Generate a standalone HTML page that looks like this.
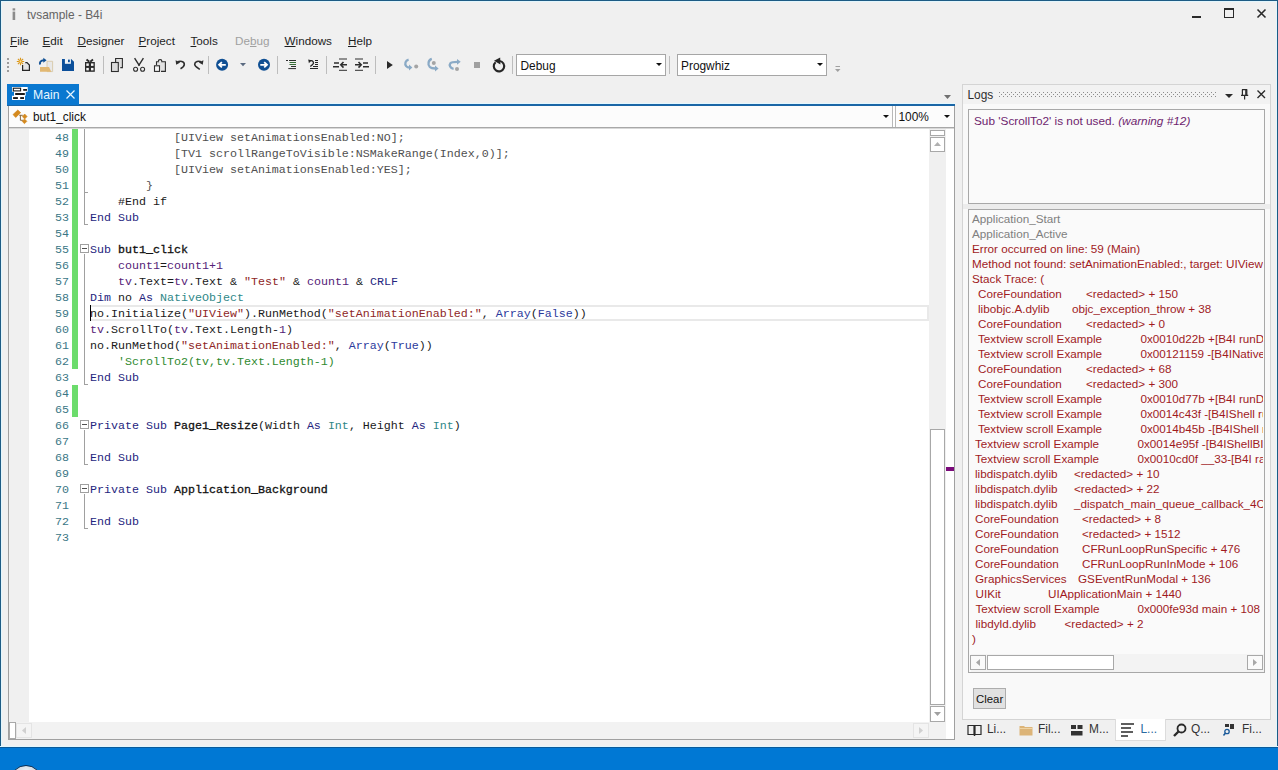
<!DOCTYPE html>
<html><head><meta charset="utf-8"><style>
*{margin:0;padding:0;box-sizing:border-box}
html,body{width:1278px;height:770px;overflow:hidden;background:#f0f0f0;position:relative;font-family:"Liberation Sans", sans-serif}
.r{position:absolute}
.t{position:absolute;white-space:pre;line-height:14px;font-family:"Liberation Sans", sans-serif}
.c{position:absolute;white-space:pre;line-height:16px;font-family:"Liberation Mono", monospace;font-size:11.67px;left:90px;color:#1a1a1a}
.ln{position:absolute;white-space:pre;line-height:16px;font-family:"Liberation Mono", monospace;font-size:11.67px;color:#3a7686;text-align:right;width:40px;left:29px}
svg{position:absolute;overflow:visible}
.kw{color:#25257e} .bd{color:#111;-webkit-text-stroke:0.3px #111} .vr{color:#552278} .st{color:#8e2626} .ty{color:#2f8888} .cm{color:#2f8a2f} .oc{color:#505050} .bl{color:#2c3a9c}
.lg{position:absolute;white-space:pre;line-height:14px;font-family:"Liberation Sans", sans-serif;font-size:11.7px;color:#a01a1e}
</style></head><body>

<div class="r" style="left:0px;top:0px;width:1278px;height:1px;background:#1d5b84"></div>
<div class="r" style="left:0px;top:1px;width:1278px;height:1px;background:#e2f6fd"></div>
<div class="r" style="left:0px;top:0px;width:1px;height:747px;background:#1d5b84"></div>
<div class="r" style="left:1px;top:1px;width:1px;height:746px;background:#e2f6fd"></div>
<div class="r" style="left:1277px;top:0px;width:1px;height:747px;background:#1d5b84"></div>
<div class="r" style="left:1276px;top:1px;width:1px;height:746px;background:#e2f6fd"></div>
<div class="r" style="left:0px;top:746px;width:1278px;height:1px;background:#e2f6fd"></div>
<div class="r" style="left:0px;top:747px;width:1278px;height:23px;background:#0078d4"></div>
<div class="r" style="left:0px;top:747px;width:1278px;height:1px;background:#0a5a9a"></div>
<div class="r" style="left:10px;top:765px;width:32px;height:32px;border-radius:50%;border:1.5px solid #0b2f55;background:radial-gradient(circle at 50% 20%,#eef2f6,#b4c4d2 60%)"></div>
<svg style="position:absolute;left:12px;top:8px" width="4" height="13"><rect x="0.6" y="0.3" width="2.6" height="2.2" fill="#8c8c8c"/><rect x="0.6" y="3.6" width="2.6" height="8.4" fill="#8c8c8c"/></svg>
<div class="t" style="left:27px;top:8px;font-size:11.9px;color:#646464;">tvsample - B4i</div>
<div class="r" style="left:1192px;top:16px;width:9px;height:2px;background:#2a2a2a"></div>
<div class="r" style="left:1224px;top:8px;width:10px;height:10px;border:1px solid #2a2a2a;border-top:2px solid #2a2a2a"></div>
<svg style="left:1257px;top:9px" width="9" height="9"><path d="M0.5 0.5L8.5 8.5M8.5 0.5L0.5 8.5" stroke="#2a2a2a" stroke-width="1.6"/></svg>
<div class="t" style="left:10.0px;top:34px;font-size:11.7px;color:#1e1e1e;"><u style="text-decoration-thickness:1px;text-underline-offset:1px">F</u>ile</div>
<div class="t" style="left:42.5px;top:34px;font-size:11.7px;color:#1e1e1e;"><u style="text-decoration-thickness:1px;text-underline-offset:1px">E</u>dit</div>
<div class="t" style="left:77.5px;top:34px;font-size:11.7px;color:#1e1e1e;"><u style="text-decoration-thickness:1px;text-underline-offset:1px">D</u>esigner</div>
<div class="t" style="left:138.5px;top:34px;font-size:11.7px;color:#1e1e1e;"><u style="text-decoration-thickness:1px;text-underline-offset:1px">P</u>roject</div>
<div class="t" style="left:190.5px;top:34px;font-size:11.7px;color:#1e1e1e;"><u style="text-decoration-thickness:1px;text-underline-offset:1px">T</u>ools</div>
<div class="t" style="left:235.0px;top:34px;font-size:11.7px;color:#a0a0a0;">De<u style="text-decoration-thickness:1px;text-underline-offset:1px">b</u>ug</div>
<div class="t" style="left:284.5px;top:34px;font-size:11.7px;color:#1e1e1e;"><u style="text-decoration-thickness:1px;text-underline-offset:1px">W</u>indows</div>
<div class="t" style="left:348.0px;top:34px;font-size:11.7px;color:#1e1e1e;"><u style="text-decoration-thickness:1px;text-underline-offset:1px">H</u>elp</div>
<div class="r" style="left:7px;top:58px;width:2px;height:2px;background:#9c9c9c"></div>
<div class="r" style="left:7px;top:62px;width:2px;height:2px;background:#9c9c9c"></div>
<div class="r" style="left:7px;top:66px;width:2px;height:2px;background:#9c9c9c"></div>
<div class="r" style="left:7px;top:70px;width:2px;height:2px;background:#9c9c9c"></div>
<svg style="left:16px;top:56px" width="16" height="17" viewBox="16 56 16 17"><g stroke="#d8961e" stroke-width="1.1"><path d="M20.5 57.8V65.2M16.8 61.5H24.2M17.9 58.9L23.1 64.1M23.1 58.9L17.9 64.1"/></g><circle cx="20.5" cy="61.5" r="1.9" fill="#e4a428"/><circle cx="20.5" cy="61.5" r="0.9" fill="#f8e0a0"/><path d="M25.3 62.6H27L29.4 65V70.4H22.6V65" fill="#e4e4e4" stroke="#262626" stroke-width="1.2"/></svg>
<svg style="left:38px;top:56px" width="16" height="17" viewBox="38 56 16 17"><path d="M47 61.3H52.6V71.6H47Z" fill="#e8e8e8" stroke="#d8c8a8" stroke-width="0.9"/><path d="M40 67H49L51.3 71.8H40Z" fill="#e2b872"/><path d="M40.3 64.6C39 62.5 40.8 60.3 44 60.3" fill="none" stroke="#0f4f93" stroke-width="1.9"/><path d="M43.3 57.8L46.6 60.3L43.3 62.8Z" fill="#0f4f93"/></svg>
<svg style="left:61px;top:58px" width="14" height="14" viewBox="61 58 14 14"><path d="M62 59H71.2L74 61.8V71H62Z" fill="#0b4f9a"/><rect x="64.9" y="59" width="6" height="4.8" fill="#f0f4f8"/><rect x="68" y="59.6" width="1.8" height="2.6" fill="#0b4f9a"/></svg>
<svg style="left:84px;top:57px" width="12" height="16" viewBox="84 57 12 16"><path d="M86.5 59.5L89.3 61.8M93 59.5L90.2 61.8" stroke="#2a2a2a" stroke-width="1.8"/><rect x="85" y="62" width="9.8" height="9.8" fill="#2a2a2a"/><rect x="86.3" y="63.4" width="2.5" height="2.5" fill="#f4f4f4"/><rect x="91" y="63.4" width="2.5" height="2.5" fill="#f4f4f4"/><rect x="86.3" y="67.9" width="2.5" height="2.5" fill="#f4f4f4"/><rect x="91" y="67.9" width="2.5" height="2.5" fill="#f4f4f4"/></svg>
<div class="r" style="left:103px;top:56px;width:1px;height:18px;background:#bdbdbd"></div>
<div class="r" style="left:208px;top:56px;width:1px;height:18px;background:#bdbdbd"></div>
<div class="r" style="left:277px;top:56px;width:1px;height:18px;background:#bdbdbd"></div>
<div class="r" style="left:326px;top:56px;width:1px;height:18px;background:#bdbdbd"></div>
<div class="r" style="left:375px;top:56px;width:1px;height:18px;background:#bdbdbd"></div>
<div class="r" style="left:512px;top:56px;width:1px;height:18px;background:#bdbdbd"></div>
<div class="r" style="left:669px;top:56px;width:1px;height:18px;background:#bdbdbd"></div>
<svg style="left:110px;top:57px" width="14" height="16" viewBox="110 57 14 16"><path d="M115.6 62V58.5H122.4V67.6H120.3" fill="#dedede" stroke="#2e2e2e" stroke-width="1.1"/><rect x="111.5" y="62.5" width="6.8" height="9" fill="#dcdcdc" stroke="#2e2e2e" stroke-width="1.1"/></svg>
<svg style="left:132px;top:57px" width="14" height="16" viewBox="132 57 14 16"><path d="M134.6 58.2L139.5 65.8M143.4 58.2L138.5 65.8" stroke="#2e2e2e" stroke-width="1.4" fill="none"/><circle cx="135.6" cy="69.3" r="2" fill="none" stroke="#2e2e2e" stroke-width="1.1"/><circle cx="142.6" cy="69.3" r="2" fill="none" stroke="#2e2e2e" stroke-width="1.1"/></svg>
<svg style="left:153px;top:57px" width="14" height="16" viewBox="153 57 14 16"><path d="M156.5 65V61.8H158.5A1.6 1.6 0 0 1 161.7 61.8H165.4V71.4H161" fill="#e2e2e2" stroke="#2e2e2e" stroke-width="1.1"/><path d="M158.3 61.5A1.8 1.8 0 0 1 161.9 61.5" fill="#fff" stroke="#2e2e2e" stroke-width="1.2"/><rect x="154.5" y="65.8" width="5" height="5.6" fill="#f6f6f6" stroke="#2e2e2e" stroke-width="1.1"/></svg>
<svg style="left:174px;top:59px" width="12" height="11" viewBox="174 59 12 11"><path d="M177.5 61.8C180 60.8 184.3 61.2 184.3 64.3C184.3 66.5 182.5 67.8 180.5 68.8" fill="none" stroke="#2e2e2e" stroke-width="1.6"/><path d="M175.6 60.2L176.2 64.8L180.2 62.4Z" fill="#2e2e2e"/></svg>
<svg style="left:193px;top:59px" width="12" height="12" viewBox="193 59 12 12"><path d="M201.2 61.8C198.8 60.6 194.8 61.3 194.7 64.3C194.8 66.5 197.5 67.8 199.8 69.3" fill="none" stroke="#2e2e2e" stroke-width="1.6"/><path d="M203.4 60.2L202.8 64.8L198.8 62.4Z" fill="#2e2e2e"/></svg>
<svg style="left:215px;top:58px" width="14" height="14" viewBox="215 58 14 14"><circle cx="222.1" cy="64.8" r="6" fill="#0f4f93"/><path d="M225.8 64.8H220.3M221.9 62.2L219.1 64.8L221.9 67.4" fill="none" stroke="#fff" stroke-width="1.8"/></svg>
<svg style="left:239px;top:62px" width="8" height="5" viewBox="239 62 8 5"><path d="M240 63H246L243 66.3Z" fill="#5a6a80"/></svg>
<svg style="left:257px;top:58px" width="14" height="14" viewBox="257 58 14 14"><circle cx="264" cy="64.8" r="6" fill="#0f4f93"/><path d="M260.3 64.8H265.8M264.2 62.2L267 64.8L264.2 67.4" fill="none" stroke="#fff" stroke-width="1.8"/></svg>
<svg style="left:285px;top:59px" width="12" height="11" viewBox="285 59 12 11"><path d="M286 60.5H288M289 60.5H296M288.3 68.6H296M291 66.5H296" stroke="#2e2e2e" stroke-width="1"/><path d="M289.5 62.5H296M289.5 64.5H296" stroke="#356a35" stroke-width="1"/></svg>
<svg style="left:307px;top:58px" width="12" height="12" viewBox="307 58 12 12"><path d="M308.2 59.6L311.6 60.3L308.9 63.2Z" fill="#262626"/><path d="M309.6 60.9C313 59.9 314.6 62.6 312.6 64.6L310.3 66.5" fill="none" stroke="#262626" stroke-width="1.3"/><path d="M315 60.5H318M315 62.5H318M315 64.5H318M313 66.5H318M310 68.5H318" stroke="#262626" stroke-width="1"/></svg>
<svg style="left:332px;top:58px" width="16" height="14" viewBox="332 58 16 14"><path d="M339 59H347M339 70.3H347" stroke="#2e2e2e" stroke-width="1"/><path d="M334 63H339M333 66.8H339M341 64.8H347" stroke="#2e2e2e" stroke-width="1.6"/><path d="M343.5 62L340.8 64.8L343.5 67.6" fill="none" stroke="#2e2e2e" stroke-width="1.6"/></svg>
<svg style="left:354px;top:58px" width="16" height="14" viewBox="354 58 16 14"><path d="M355 59H363M355 70.3H363" stroke="#2e2e2e" stroke-width="1"/><path d="M363 63H368M363 66.8H369M355 64.8H361" stroke="#2e2e2e" stroke-width="1.6"/><path d="M358.5 62L361.2 64.8L358.5 67.6" fill="none" stroke="#2e2e2e" stroke-width="1.6"/></svg>
<svg style="left:386px;top:60px" width="8" height="10" viewBox="386 60 8 10"><path d="M387 61L392.8 65L387 69Z" fill="#2a2a2a"/></svg>
<svg style="left:403px;top:58px" width="16" height="14" viewBox="403 58 16 14"><path d="M408.6 59.6C405.4 60.4 404.3 63.8 406.3 66.2C407.2 67.2 408.3 67.5 409.5 67.5" fill="none" stroke="#8aaac6" stroke-width="2.3"/><path d="M409 64.6L412.4 67.5L409 70.4Z" fill="#8aaac6"/><circle cx="416.2" cy="66.5" r="2" fill="#a4a4a4"/></svg>
<svg style="left:426px;top:57px" width="14" height="16" viewBox="426 57 14 16"><path d="M431.8 58.8C428.3 59.8 427.4 64.6 429.8 67 C431 68.2 432.6 68.5 435.5 68.5" fill="none" stroke="#8aaac6" stroke-width="2.3"/><path d="M435 65.6L438.6 68.5L435 71.4Z" fill="#8aaac6"/><circle cx="433.8" cy="63" r="2" fill="#a4a4a4"/></svg>
<svg style="left:448px;top:57px" width="14" height="15" viewBox="448 57 14 15"><path d="M453.6 68.8C450 68.3 449 65 450.4 63.2C451.6 61.8 454 61.8 457.5 61.8" fill="none" stroke="#8aaac6" stroke-width="2.3"/><path d="M457 58.9L460.7 61.8L457 64.7Z" fill="#8aaac6"/><circle cx="457" cy="69" r="2" fill="#a4a4a4"/></svg>
<div class="r" style="left:474px;top:62px;width:6px;height:6px;background:#a0a0a0"></div>
<svg style="left:492px;top:56px" width="14" height="17" viewBox="492 56 14 17"><path d="M495.6 62.2A5.2 5.2 0 1 0 499.6 61" fill="none" stroke="#262626" stroke-width="2.1"/><path d="M494 60.8L500.2 57.6L500.4 64.4Z" fill="#262626"/></svg>
<div class="r" style="left:516px;top:54px;width:150px;height:22px;background:#fff;border:1px solid #a6a6a6"></div>
<div class="t" style="left:520.5px;top:59px;font-size:11.9px;color:#111;">Debug</div>
<svg style="left:656px;top:63px" width="7" height="4" viewBox="0 0 7 4"><path d="M0 0H6L3 3Z" fill="#111"/></svg>
<div class="r" style="left:677px;top:54px;width:150px;height:22px;background:#fff;border:1px solid #a6a6a6"></div>
<div class="t" style="left:681px;top:59px;font-size:11.9px;color:#111;">Progwhiz</div>
<svg style="left:817px;top:63px" width="7" height="4" viewBox="0 0 7 4"><path d="M0 0H6L3 3Z" fill="#111"/></svg>
<svg style="left:835px;top:66px" width="6" height="7" viewBox="0 0 6 7"><path d="M0.5 0.5H5" stroke="#a0a0a0" stroke-width="1"/><path d="M0 3H5.5L2.75 6Z" fill="#a0a0a0"/></svg>
<div class="r" style="left:7px;top:84px;width:72px;height:22px;background:#0a78d0"></div>
<svg style="left:11px;top:86px" width="18" height="15" viewBox="11 86 18 15"><path d="M12 87H27.7V91.7H25.7V95.7H25V100H12V95.7H14V91.7H12Z" fill="#fff"/><rect x="13.3" y="88.2" width="7.3" height="2.7" fill="none" stroke="#1a1a1a" stroke-width="1.1"/><rect x="23.2" y="89" width="3.8" height="1.8" fill="#1a1a1a"/><rect x="15.2" y="93" width="9.6" height="2" fill="#1a1a1a"/><rect x="13.1" y="97.1" width="4.8" height="1.9" fill="#1a1a1a"/><rect x="20.2" y="97.1" width="3.8" height="1.9" fill="#1a1a1a"/></svg>
<div class="t" style="left:33px;top:88px;font-size:12.2px;color:#e8f6ff;">Main</div>
<svg style="left:66px;top:90px" width="9" height="9" viewBox="0 0 9 9"><path d="M0.5 0.5L8.5 8.5M8.5 0.5L0.5 8.5" stroke="#e8f6ff" stroke-width="1.2"/></svg>
<div class="r" style="left:79px;top:103px;width:876px;height:1px;background:#e4f8ff"></div>
<div class="r" style="left:7px;top:104px;width:948px;height:2px;background:#1a66a6"></div>
<div class="r" style="left:7px;top:104px;width:72px;height:1px;background:#0a78d0"></div>
<svg style="left:944px;top:95px" width="8" height="5" viewBox="0 0 8 5"><path d="M0 0H7L3.5 4Z" fill="#707070"/></svg>
<div class="r" style="left:8px;top:106px;width:947px;height:634px;background:#fff;border-left:1px solid #a0a0a0;border-right:1px solid #a0a0a0;border-bottom:1px solid #a0a0a0"></div>
<div class="r" style="left:9px;top:106px;width:884px;height:21px;background:#fcfcfc;border-right:1px solid #b8b8b8"></div>
<div class="r" style="left:895px;top:106px;width:59px;height:21px;background:#fcfcfc;border-left:1px solid #b8b8b8"></div>
<div class="r" style="left:9px;top:127px;width:945px;height:1px;background:#a8a8a8"></div>
<div class="r" style="left:9px;top:128px;width:945px;height:1px;background:#d8d8d8"></div>
<svg style="left:12px;top:109px" width="16" height="16" viewBox="12 109 16 16"><path d="M13.1 114.5L17.8 110.1L20.6 112.7L15.7 117.4Z" fill="#d4891e" stroke="#d4891e" stroke-width="0.8" stroke-linejoin="round"/><path d="M19.3 115.3H22.8M20.4 115.3V120.3H23" fill="none" stroke="#7a5a30" stroke-width="0.9"/><path d="M22.3 116.5L24.7 114L27.1 116.5L24.7 119Z" fill="#d4891e" stroke="#d4891e" stroke-width="0.6"/><path d="M22.1 121.3L24.5 118.9L26.9 121.3L24.5 123.7Z" fill="#d4891e" stroke="#d4891e" stroke-width="0.6"/></svg>
<div class="t" style="left:33px;top:110px;font-size:11.9px;color:#111;">but1_click</div>
<svg style="left:883px;top:115px" width="7" height="4" viewBox="0 0 7 4"><path d="M0 0H6L3 3Z" fill="#111"/></svg>
<div class="t" style="left:898.5px;top:110px;font-size:11.9px;color:#111;">100%</div>
<svg style="left:944px;top:115px" width="7" height="4" viewBox="0 0 7 4"><path d="M0 0H6L3 3Z" fill="#111"/></svg>
<div class="r" style="left:9px;top:129px;width:20px;height:593px;background:#f0f0f0"></div>
<div class="r" style="left:90px;top:305px;width:839px;height:16px;border:2px solid #e9e9e9;border-left:none"></div>
<div class="r" style="left:90px;top:305px;width:1px;height:16px;background:#000"></div>
<div class="r" style="left:72px;top:129px;width:6px;height:240px;background:#6cdc6c"></div>
<div class="r" style="left:72px;top:385px;width:6px;height:32px;background:#6cdc6c"></div>
<div class="ln" style="top:130px">48</div>
<div class="c" style="top:130px"><span class="oc">            [UIView setAnimationsEnabled:NO];</span></div>
<div class="ln" style="top:146px">49</div>
<div class="c" style="top:146px"><span class="oc">            [TV1 scrollRangeToVisible:NSMakeRange(Index,0)];</span></div>
<div class="ln" style="top:162px">50</div>
<div class="c" style="top:162px"><span class="oc">            [UIView setAnimationsEnabled:YES];</span></div>
<div class="ln" style="top:178px">51</div>
<div class="c" style="top:178px"><span class="oc">        }</span></div>
<div class="ln" style="top:194px">52</div>
<div class="c" style="top:194px">    #End if</div>
<div class="ln" style="top:210px">53</div>
<div class="c" style="top:210px"><span class="kw">End Sub</span></div>
<div class="ln" style="top:226px">54</div>
<div class="ln" style="top:242px">55</div>
<div class="c" style="top:242px"><span class="kw">Sub</span> <span class="bd">but1_click</span></div>
<div class="ln" style="top:258px">56</div>
<div class="c" style="top:258px">    <span class="vr">count1</span>=<span class="vr">count1</span><span class="vr">+1</span></div>
<div class="ln" style="top:274px">57</div>
<div class="c" style="top:274px">    <span class="vr">tv</span>.Text=<span class="vr">tv</span>.Text &amp; <span class="st">"Test"</span> &amp; <span class="vr">count1</span> &amp; <span class="kw">CRLF</span></div>
<div class="ln" style="top:290px">58</div>
<div class="c" style="top:290px"><span class="kw">Dim</span> no <span class="kw">As</span> <span class="ty">NativeObject</span></div>
<div class="ln" style="top:306px">59</div>
<div class="c" style="top:306px">no.Initialize(<span class="st">"UIView"</span>).RunMethod(<span class="st">"setAnimationEnabled:"</span>, <span class="bl">Array</span>(<span class="bl">False</span>))</div>
<div class="ln" style="top:322px">60</div>
<div class="c" style="top:322px"><span class="vr">tv</span>.ScrollTo(<span class="vr">tv</span>.Text.Length-<span class="vr">1</span>)</div>
<div class="ln" style="top:338px">61</div>
<div class="c" style="top:338px">no.RunMethod(<span class="st">"setAnimationEnabled:"</span>, <span class="bl">Array</span>(<span class="bl">True</span>))</div>
<div class="ln" style="top:354px">62</div>
<div class="c" style="top:354px"><span class="cm">    'ScrollTo2(tv,tv.Text.Length-1)</span></div>
<div class="ln" style="top:370px">63</div>
<div class="c" style="top:370px"><span class="kw">End Sub</span></div>
<div class="ln" style="top:386px">64</div>
<div class="ln" style="top:402px">65</div>
<div class="ln" style="top:418px">66</div>
<div class="c" style="top:418px"><span class="kw">Private Sub</span> <span class="bd">Page1_Resize</span>(Width <span class="kw">As</span> <span class="ty">Int</span>, Height <span class="kw">As</span> <span class="ty">Int</span>)</div>
<div class="ln" style="top:434px">67</div>
<div class="ln" style="top:450px">68</div>
<div class="c" style="top:450px"><span class="kw">End Sub</span></div>
<div class="ln" style="top:466px">69</div>
<div class="ln" style="top:482px">70</div>
<div class="c" style="top:482px"><span class="kw">Private Sub</span> <span class="bd">Application_Background</span></div>
<div class="ln" style="top:498px">71</div>
<div class="ln" style="top:514px">72</div>
<div class="c" style="top:514px"><span class="kw">End Sub</span></div>
<div class="ln" style="top:530px">73</div>
<div class="r" style="left:84px;top:129px;width:1px;height:95px;background:#a0a0a0"></div>
<div class="r" style="left:84px;top:192px;width:4px;height:1px;background:#a0a0a0"></div>
<div class="r" style="left:84px;top:224px;width:4px;height:1px;background:#a0a0a0"></div>
<div class="r" style="left:80px;top:244px;width:9px;height:9px;border:1px solid #a0a0a0;background:#fff"></div>
<div class="r" style="left:82px;top:248px;width:5px;height:1px;background:#505050"></div>
<div class="r" style="left:84px;top:254px;width:1px;height:130px;background:#a0a0a0"></div>
<div class="r" style="left:84px;top:384px;width:4px;height:1px;background:#a0a0a0"></div>
<div class="r" style="left:80px;top:420px;width:9px;height:9px;border:1px solid #a0a0a0;background:#fff"></div>
<div class="r" style="left:82px;top:424px;width:5px;height:1px;background:#505050"></div>
<div class="r" style="left:84px;top:430px;width:1px;height:34px;background:#a0a0a0"></div>
<div class="r" style="left:84px;top:464px;width:4px;height:1px;background:#a0a0a0"></div>
<div class="r" style="left:80px;top:484px;width:9px;height:9px;border:1px solid #a0a0a0;background:#fff"></div>
<div class="r" style="left:82px;top:488px;width:5px;height:1px;background:#505050"></div>
<div class="r" style="left:84px;top:494px;width:1px;height:34px;background:#a0a0a0"></div>
<div class="r" style="left:84px;top:528px;width:4px;height:1px;background:#a0a0a0"></div>
<div class="r" style="left:929px;top:129px;width:17px;height:593px;background:#f0f0f0"></div>
<div class="r" style="left:946px;top:129px;width:8px;height:593px;background:#fff"></div>
<div class="r" style="left:930px;top:130px;width:15px;height:6px;background:#fff;border:1px solid #a8a8a8"></div>
<div class="r" style="left:930px;top:137px;width:15px;height:15px;background:#fff;border:1px solid #a8a8a8"></div>
<svg style="left:934px;top:142px" width="7" height="4" viewBox="0 0 7 4"><path d="M0 4H7L3.5 0Z" fill="#b0b0b0"/></svg>
<div class="r" style="left:930px;top:429px;width:15px;height:276px;background:#fff;border:1px solid #a8a8a8"></div>
<div class="r" style="left:930px;top:706px;width:15px;height:16px;background:#fff;border:1px solid #a8a8a8"></div>
<svg style="left:934px;top:712px" width="7" height="4" viewBox="0 0 7 4"><path d="M0 0H7L3.5 4Z" fill="#a0a0a0"/></svg>
<div class="r" style="left:946px;top:467px;width:8px;height:4px;background:#7a0a7a"></div>
<div class="r" style="left:9px;top:722px;width:937px;height:17px;background:#f2f2f2"></div>
<div class="r" style="left:9px;top:722px;width:7px;height:17px;background:#fff;border:1px solid #a8a8a8"></div>
<div class="r" style="left:16px;top:723px;width:16px;height:15px;background:#f4f4f4;border:1px solid #e4e4e4"></div>
<svg style="left:22px;top:727px" width="4" height="7" viewBox="0 0 4 7"><path d="M4 0V7L0 3.5Z" fill="#d0d0d0"/></svg>
<div class="r" style="left:913px;top:723px;width:16px;height:15px;background:#f4f4f4;border:1px solid #e4e4e4"></div>
<svg style="left:919px;top:727px" width="4" height="7" viewBox="0 0 4 7"><path d="M0 0V7L4 3.5Z" fill="#d0d0d0"/></svg>
<div class="r" style="left:962px;top:84px;width:309px;height:636px;background:#f9f9f9;border:1px solid #d4d4d4"></div>
<div class="r" style="left:963px;top:85px;width:307px;height:19px;background:#f2f2f2"></div>
<div class="t" style="left:967.5px;top:88px;font-size:11.9px;color:#2e2e2e;">Logs</div>
<svg style="left:999px;top:92px" width="220" height="6"><g fill="#8c8c8c"><rect x="0" y="0" width="1" height="1"/><rect x="0" y="4" width="1" height="1"/><rect x="2" y="2" width="1" height="1"/><rect x="4" y="0" width="1" height="1"/><rect x="4" y="4" width="1" height="1"/><rect x="6" y="2" width="1" height="1"/><rect x="8" y="0" width="1" height="1"/><rect x="8" y="4" width="1" height="1"/><rect x="10" y="2" width="1" height="1"/><rect x="12" y="0" width="1" height="1"/><rect x="12" y="4" width="1" height="1"/><rect x="14" y="2" width="1" height="1"/><rect x="16" y="0" width="1" height="1"/><rect x="16" y="4" width="1" height="1"/><rect x="18" y="2" width="1" height="1"/><rect x="20" y="0" width="1" height="1"/><rect x="20" y="4" width="1" height="1"/><rect x="22" y="2" width="1" height="1"/><rect x="24" y="0" width="1" height="1"/><rect x="24" y="4" width="1" height="1"/><rect x="26" y="2" width="1" height="1"/><rect x="28" y="0" width="1" height="1"/><rect x="28" y="4" width="1" height="1"/><rect x="30" y="2" width="1" height="1"/><rect x="32" y="0" width="1" height="1"/><rect x="32" y="4" width="1" height="1"/><rect x="34" y="2" width="1" height="1"/><rect x="36" y="0" width="1" height="1"/><rect x="36" y="4" width="1" height="1"/><rect x="38" y="2" width="1" height="1"/><rect x="40" y="0" width="1" height="1"/><rect x="40" y="4" width="1" height="1"/><rect x="42" y="2" width="1" height="1"/><rect x="44" y="0" width="1" height="1"/><rect x="44" y="4" width="1" height="1"/><rect x="46" y="2" width="1" height="1"/><rect x="48" y="0" width="1" height="1"/><rect x="48" y="4" width="1" height="1"/><rect x="50" y="2" width="1" height="1"/><rect x="52" y="0" width="1" height="1"/><rect x="52" y="4" width="1" height="1"/><rect x="54" y="2" width="1" height="1"/><rect x="56" y="0" width="1" height="1"/><rect x="56" y="4" width="1" height="1"/><rect x="58" y="2" width="1" height="1"/><rect x="60" y="0" width="1" height="1"/><rect x="60" y="4" width="1" height="1"/><rect x="62" y="2" width="1" height="1"/><rect x="64" y="0" width="1" height="1"/><rect x="64" y="4" width="1" height="1"/><rect x="66" y="2" width="1" height="1"/><rect x="68" y="0" width="1" height="1"/><rect x="68" y="4" width="1" height="1"/><rect x="70" y="2" width="1" height="1"/><rect x="72" y="0" width="1" height="1"/><rect x="72" y="4" width="1" height="1"/><rect x="74" y="2" width="1" height="1"/><rect x="76" y="0" width="1" height="1"/><rect x="76" y="4" width="1" height="1"/><rect x="78" y="2" width="1" height="1"/><rect x="80" y="0" width="1" height="1"/><rect x="80" y="4" width="1" height="1"/><rect x="82" y="2" width="1" height="1"/><rect x="84" y="0" width="1" height="1"/><rect x="84" y="4" width="1" height="1"/><rect x="86" y="2" width="1" height="1"/><rect x="88" y="0" width="1" height="1"/><rect x="88" y="4" width="1" height="1"/><rect x="90" y="2" width="1" height="1"/><rect x="92" y="0" width="1" height="1"/><rect x="92" y="4" width="1" height="1"/><rect x="94" y="2" width="1" height="1"/><rect x="96" y="0" width="1" height="1"/><rect x="96" y="4" width="1" height="1"/><rect x="98" y="2" width="1" height="1"/><rect x="100" y="0" width="1" height="1"/><rect x="100" y="4" width="1" height="1"/><rect x="102" y="2" width="1" height="1"/><rect x="104" y="0" width="1" height="1"/><rect x="104" y="4" width="1" height="1"/><rect x="106" y="2" width="1" height="1"/><rect x="108" y="0" width="1" height="1"/><rect x="108" y="4" width="1" height="1"/><rect x="110" y="2" width="1" height="1"/><rect x="112" y="0" width="1" height="1"/><rect x="112" y="4" width="1" height="1"/><rect x="114" y="2" width="1" height="1"/><rect x="116" y="0" width="1" height="1"/><rect x="116" y="4" width="1" height="1"/><rect x="118" y="2" width="1" height="1"/><rect x="120" y="0" width="1" height="1"/><rect x="120" y="4" width="1" height="1"/><rect x="122" y="2" width="1" height="1"/><rect x="124" y="0" width="1" height="1"/><rect x="124" y="4" width="1" height="1"/><rect x="126" y="2" width="1" height="1"/><rect x="128" y="0" width="1" height="1"/><rect x="128" y="4" width="1" height="1"/><rect x="130" y="2" width="1" height="1"/><rect x="132" y="0" width="1" height="1"/><rect x="132" y="4" width="1" height="1"/><rect x="134" y="2" width="1" height="1"/><rect x="136" y="0" width="1" height="1"/><rect x="136" y="4" width="1" height="1"/><rect x="138" y="2" width="1" height="1"/><rect x="140" y="0" width="1" height="1"/><rect x="140" y="4" width="1" height="1"/><rect x="142" y="2" width="1" height="1"/><rect x="144" y="0" width="1" height="1"/><rect x="144" y="4" width="1" height="1"/><rect x="146" y="2" width="1" height="1"/><rect x="148" y="0" width="1" height="1"/><rect x="148" y="4" width="1" height="1"/><rect x="150" y="2" width="1" height="1"/><rect x="152" y="0" width="1" height="1"/><rect x="152" y="4" width="1" height="1"/><rect x="154" y="2" width="1" height="1"/><rect x="156" y="0" width="1" height="1"/><rect x="156" y="4" width="1" height="1"/><rect x="158" y="2" width="1" height="1"/><rect x="160" y="0" width="1" height="1"/><rect x="160" y="4" width="1" height="1"/><rect x="162" y="2" width="1" height="1"/><rect x="164" y="0" width="1" height="1"/><rect x="164" y="4" width="1" height="1"/><rect x="166" y="2" width="1" height="1"/><rect x="168" y="0" width="1" height="1"/><rect x="168" y="4" width="1" height="1"/><rect x="170" y="2" width="1" height="1"/><rect x="172" y="0" width="1" height="1"/><rect x="172" y="4" width="1" height="1"/><rect x="174" y="2" width="1" height="1"/><rect x="176" y="0" width="1" height="1"/><rect x="176" y="4" width="1" height="1"/><rect x="178" y="2" width="1" height="1"/><rect x="180" y="0" width="1" height="1"/><rect x="180" y="4" width="1" height="1"/><rect x="182" y="2" width="1" height="1"/><rect x="184" y="0" width="1" height="1"/><rect x="184" y="4" width="1" height="1"/><rect x="186" y="2" width="1" height="1"/><rect x="188" y="0" width="1" height="1"/><rect x="188" y="4" width="1" height="1"/><rect x="190" y="2" width="1" height="1"/><rect x="192" y="0" width="1" height="1"/><rect x="192" y="4" width="1" height="1"/><rect x="194" y="2" width="1" height="1"/><rect x="196" y="0" width="1" height="1"/><rect x="196" y="4" width="1" height="1"/><rect x="198" y="2" width="1" height="1"/><rect x="200" y="0" width="1" height="1"/><rect x="200" y="4" width="1" height="1"/><rect x="202" y="2" width="1" height="1"/><rect x="204" y="0" width="1" height="1"/><rect x="204" y="4" width="1" height="1"/><rect x="206" y="2" width="1" height="1"/><rect x="208" y="0" width="1" height="1"/><rect x="208" y="4" width="1" height="1"/><rect x="210" y="2" width="1" height="1"/><rect x="212" y="0" width="1" height="1"/><rect x="212" y="4" width="1" height="1"/><rect x="214" y="2" width="1" height="1"/><rect x="216" y="0" width="1" height="1"/><rect x="216" y="4" width="1" height="1"/></g></svg>
<svg style="left:1225px;top:94px" width="8" height="5" viewBox="0 0 8 5"><path d="M0 0H8L4 4Z" fill="#2a2a2a"/></svg>
<svg style="left:1240px;top:88px" width="10" height="12" viewBox="1240 88 10 12"><path d="M1242 89.6H1247.2M1242.4 89.6V95M1246.8 89.6V95M1241 95.3H1248.2M1244.6 95.3V99.5" fill="none" stroke="#2a2a2a" stroke-width="1.2"/><rect x="1245.2" y="90" width="1.6" height="5" fill="#2a2a2a"/></svg>
<svg style="left:1256px;top:89px" width="10" height="10" viewBox="1256 89 10 10"><path d="M1257.5 90.5L1265 98M1265 90.5L1257.5 98" stroke="#2a2a2a" stroke-width="1.4"/></svg>
<div class="r" style="left:968px;top:109px;width:297px;height:95px;background:#fafafa;border:1px solid #a8a8a8"></div>
<div class="t" style="left:974px;top:114px;font-size:11.8px;color:#6e1e6e;">Sub 'ScrollTo2' is not used. <i>(warning #12)</i></div>
<div class="r" style="left:963px;top:204px;width:307px;height:5px;background:#ececec"></div>
<div class="r" style="left:968px;top:209px;width:297px;height:464px;background:#fafafa;border:1px solid #a8a8a8"></div>
<div class="r" style="left:969px;top:210px;width:294px;height:445px;overflow:hidden">
<div class="lg" style="left:3px;top:2px;color:#808080;">Application_Start</div>
<div class="lg" style="left:3px;top:17px;color:#808080;">Application_Active</div>
<div class="lg" style="left:3px;top:32px;">Error occurred on line: 59 (Main)</div>
<div class="lg" style="left:3px;top:47px;">Method not found: setAnimationEnabled:, target: UIView</div>
<div class="lg" style="left:3px;top:62px;">Stack Trace: (</div>
<div class="lg" style="left:9px;top:77px;">CoreFoundation</div>
<div class="lg" style="left:117px;top:77px;">&lt;redacted&gt; + 150</div>
<div class="lg" style="left:9px;top:92px;">libobjc.A.dylib</div>
<div class="lg" style="left:103px;top:92px;">objc_exception_throw + 38</div>
<div class="lg" style="left:9px;top:107px;">CoreFoundation</div>
<div class="lg" style="left:117px;top:107px;">&lt;redacted&gt; + 0</div>
<div class="lg" style="left:9px;top:122px;">Textview scroll Example</div>
<div class="lg" style="left:171.5px;top:122px;">0x0010d22b +[B4I runDynamicMethod]</div>
<div class="lg" style="left:9px;top:137px;">Textview scroll Example</div>
<div class="lg" style="left:171.5px;top:137px;">0x00121159 -[B4INativeObject]</div>
<div class="lg" style="left:9px;top:152px;">CoreFoundation</div>
<div class="lg" style="left:117px;top:152px;">&lt;redacted&gt; + 68</div>
<div class="lg" style="left:9px;top:167px;">CoreFoundation</div>
<div class="lg" style="left:117px;top:167px;">&lt;redacted&gt; + 300</div>
<div class="lg" style="left:9px;top:182px;">Textview scroll Example</div>
<div class="lg" style="left:171.5px;top:182px;">0x0010d77b +[B4I runDynamicMethod]</div>
<div class="lg" style="left:9px;top:197px;">Textview scroll Example</div>
<div class="lg" style="left:171.5px;top:197px;">0x0014c43f -[B4IShell runMethod]</div>
<div class="lg" style="left:9px;top:212px;">Textview scroll Example</div>
<div class="lg" style="left:171.5px;top:212px;">0x0014b45b -[B4IShell raiseEvent]</div>
<div class="lg" style="left:6px;top:227px;">Textview scroll Example</div>
<div class="lg" style="left:168.5px;top:227px;">0x0014e95f -[B4IShellBI raiseEvent]</div>
<div class="lg" style="left:6px;top:242px;">Textview scroll Example</div>
<div class="lg" style="left:168.5px;top:242px;">0x0010cd0f __33-[B4I raiseEvent]</div>
<div class="lg" style="left:6px;top:257px;">libdispatch.dylib</div>
<div class="lg" style="left:105px;top:257px;">&lt;redacted&gt; + 10</div>
<div class="lg" style="left:6px;top:272px;">libdispatch.dylib</div>
<div class="lg" style="left:105px;top:272px;">&lt;redacted&gt; + 22</div>
<div class="lg" style="left:6px;top:287px;">libdispatch.dylib</div>
<div class="lg" style="left:105px;top:287px;">_dispatch_main_queue_callback_4CF</div>
<div class="lg" style="left:6px;top:302px;">CoreFoundation</div>
<div class="lg" style="left:113px;top:302px;">&lt;redacted&gt; + 8</div>
<div class="lg" style="left:6px;top:317px;">CoreFoundation</div>
<div class="lg" style="left:113px;top:317px;">&lt;redacted&gt; + 1512</div>
<div class="lg" style="left:6px;top:332px;">CoreFoundation</div>
<div class="lg" style="left:113px;top:332px;">CFRunLoopRunSpecific + 476</div>
<div class="lg" style="left:6px;top:347px;">CoreFoundation</div>
<div class="lg" style="left:113px;top:347px;">CFRunLoopRunInMode + 106</div>
<div class="lg" style="left:6px;top:362px;">GraphicsServices</div>
<div class="lg" style="left:109px;top:362px;">GSEventRunModal + 136</div>
<div class="lg" style="left:6.5px;top:377px;">UIKit</div>
<div class="lg" style="left:79px;top:377px;">UIApplicationMain + 1440</div>
<div class="lg" style="left:6.5px;top:392px;">Textview scroll Example</div>
<div class="lg" style="left:168.5px;top:392px;">0x000fe93d main + 108</div>
<div class="lg" style="left:6.5px;top:407px;">libdyld.dylib</div>
<div class="lg" style="left:95.5px;top:407px;">&lt;redacted&gt; + 2</div>
<div class="lg" style="left:3px;top:422px;">)</div>
</div>
<div class="r" style="left:969px;top:654px;width:295px;height:18px;background:#f3f3f3"></div>
<div class="r" style="left:969px;top:654px;width:2px;height:18px;background:#fafafa"></div>
<div class="r" style="left:970px;top:655px;width:16px;height:15px;background:#fafafa;border:1px solid #a8a8a8"></div>
<svg style="left:976px;top:659px" width="4" height="7" viewBox="0 0 4 7"><path d="M4 0V7L0 3.5Z" fill="#a8a8a8"/></svg>
<div class="r" style="left:987px;top:655px;width:127px;height:15px;background:#fff;border:1px solid #a8a8a8"></div>
<div class="r" style="left:1247px;top:655px;width:16px;height:15px;background:#fafafa;border:1px solid #a8a8a8"></div>
<svg style="left:1253px;top:659px" width="4" height="7" viewBox="0 0 4 7"><path d="M0 0V7L4 3.5Z" fill="#a8a8a8"/></svg>
<div class="r" style="left:973px;top:688px;width:33px;height:21px;background:#e1e1e1;border:1px solid #adadad"></div>
<div class="t" style="left:976px;top:692px;font-size:11.4px;color:#111;">Clear</div>
<div class="r" style="left:1115px;top:719px;width:51px;height:22px;background:#fff;border:1px solid #dcdcdc;border-top:none"></div>
<svg style="left:967px;top:724px" width="16" height="12" viewBox="0 0 16 12"><path d="M1 1.5H7V10.5H1Z M8 1.5H14V10.5H8Z" fill="none" stroke="#2a2a2a" stroke-width="1.2"/><path d="M7.5 10V12" stroke="#2a2a2a" stroke-width="1.5"/></svg>
<div class="t" style="left:987px;top:722px;font-size:11.9px;color:#333;">Li...</div>
<svg style="left:1019px;top:724px" width="15" height="12" viewBox="0 0 15 12"><path d="M0.5 2H5L6 3H13.5V11.5H0.5Z" fill="#dcb478"/><path d="M0.5 4.5H13.5" stroke="#f4dcb0" stroke-width="0.8"/></svg>
<div class="t" style="left:1038px;top:722px;font-size:11.9px;color:#333;">Fil...</div>
<svg style="left:1071px;top:725px" width="12" height="11" viewBox="0 0 12 11"><rect x="0" y="0" width="5" height="4" fill="#333"/><rect x="6.5" y="0" width="5" height="4" fill="#333"/><rect x="0" y="6" width="11.5" height="4.5" fill="#333"/></svg>
<div class="t" style="left:1089px;top:722px;font-size:11.9px;color:#333;">M...</div>
<svg style="left:1121px;top:723px" width="14" height="14" viewBox="0 0 14 14"><path d="M0 1H13M0 5H10M0 9H12M0 13H7" stroke="#2a2a2a" stroke-width="1.6"/></svg>
<div class="t" style="left:1140.5px;top:722px;font-size:11.9px;color:#2a6aa0;">L...</div>
<svg style="left:1173px;top:723px" width="14" height="14" viewBox="0 0 14 14"><circle cx="8.5" cy="5.5" r="4" fill="none" stroke="#2a2a2a" stroke-width="1.8"/><path d="M5.5 8.5L1 13" stroke="#2a2a2a" stroke-width="2.4"/></svg>
<div class="t" style="left:1191px;top:722px;font-size:11.9px;color:#333;">Q...</div>
<svg style="left:1223px;top:724px" width="14" height="13" viewBox="0 0 14 13"><rect x="2" y="0" width="4" height="3" fill="#333"/><rect x="7" y="0" width="4" height="5" fill="#333"/><circle cx="4" cy="7.5" r="2.2" fill="none" stroke="#1a5a9a" stroke-width="1.3"/><path d="M2.5 9L0.5 11.5" stroke="#1a5a9a" stroke-width="1.5"/></svg>
<div class="t" style="left:1242px;top:722px;font-size:11.9px;color:#333;">Fi...</div>
</body></html>
